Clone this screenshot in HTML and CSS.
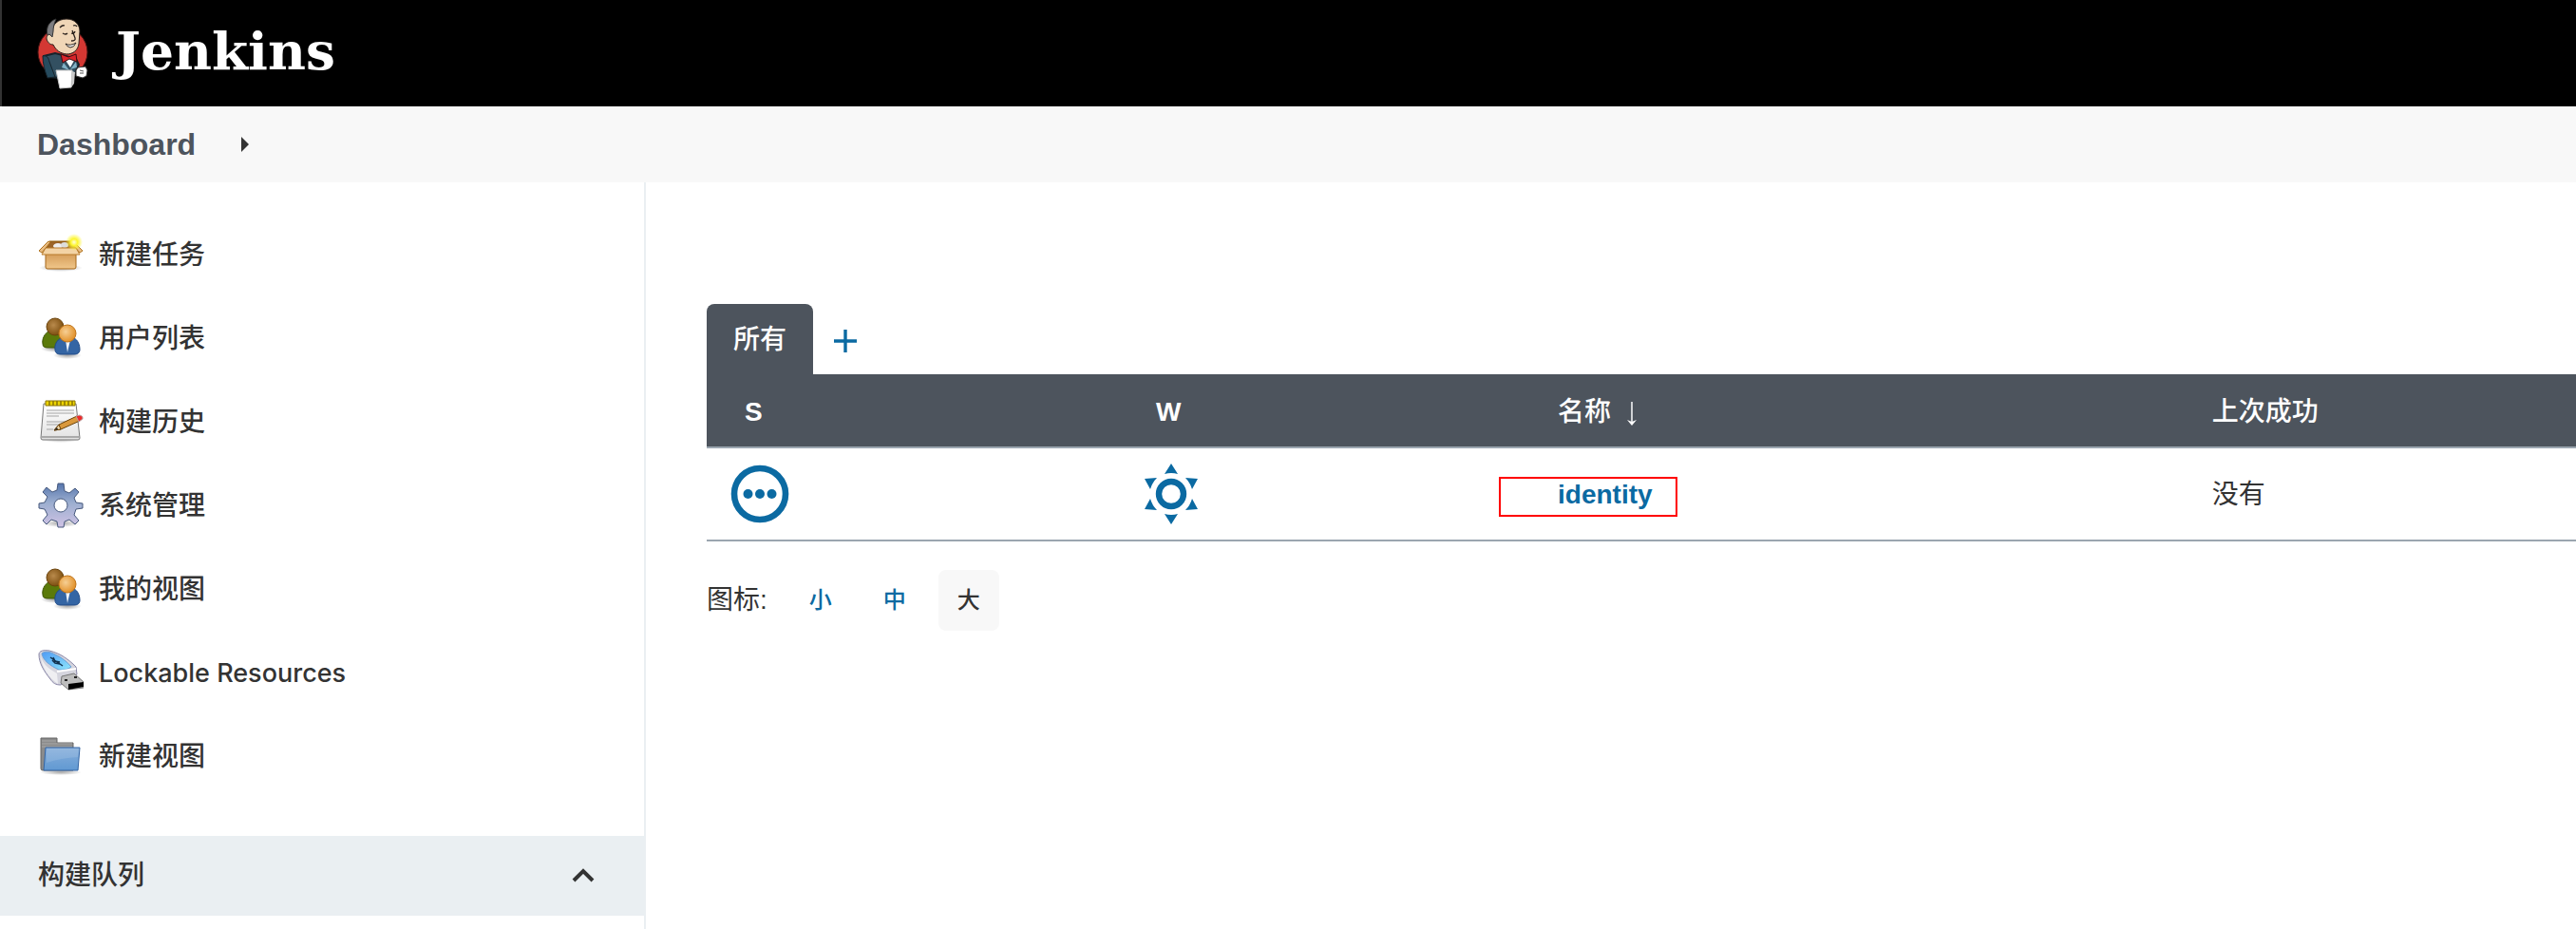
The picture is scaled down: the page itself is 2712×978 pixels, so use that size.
FILE: index.html
```
<!DOCTYPE html>
<html lang="zh-CN">
<head>
	<meta charset="utf-8">
	<title>Dashboard [Jenkins]</title>
	<link rel="stylesheet" href="styles.css">
</head>
<body>
	<svg class="defs" aria-hidden="true">
		<defs>
			<radialGradient id="brown" cx="40%" cy="40%" r="60%">
				<stop offset="0" stop-color="#b98a4c"/>
				<stop offset="1" stop-color="#7d4f10"/>
			</radialGradient>
			<radialGradient id="orange" cx="40%" cy="40%" r="60%">
				<stop offset="0" stop-color="#f6cf94"/>
				<stop offset="1" stop-color="#e2912a"/>
			</radialGradient>
			<radialGradient id="glow">
				<stop offset="0" stop-color="#fffde0"/>
				<stop offset="0.4" stop-color="#fdf62f"/>
				<stop offset="1" stop-color="#fdf62f" stop-opacity="0"/>
			</radialGradient>
			<radialGradient id="shadow">
				<stop offset="0" stop-color="#000" stop-opacity="0.35"/>
				<stop offset="1" stop-color="#000" stop-opacity="0"/>
			</radialGradient>
			<linearGradient id="box" x1="0" y1="0" x2="0" y2="1">
				<stop offset="0" stop-color="#cf9550"/>
				<stop offset="1" stop-color="#f0c68a"/>
			</linearGradient>
			<linearGradient id="gear" x1="0" y1="0" x2="0" y2="1">
				<stop offset="0" stop-color="#5676ad"/>
				<stop offset="0.45" stop-color="#9dafd0"/>
				<stop offset="1" stop-color="#cfc2e4"/>
			</linearGradient>
			<linearGradient id="paper" x1="0" y1="0" x2="0" y2="1">
				<stop offset="0" stop-color="#fff"/>
				<stop offset="1" stop-color="#e2e2e2"/>
			</linearGradient>
			<linearGradient id="folder" x1="0" y1="0" x2="0" y2="1">
				<stop offset="0" stop-color="#86aedb"/>
				<stop offset="1" stop-color="#6199d2"/>
			</linearGradient>
			<linearGradient id="usb" x1="0" y1="0" x2="1" y2="1">
				<stop offset="0" stop-color="#4f9bf5"/>
				<stop offset="1" stop-color="#8fe6fb"/>
			</linearGradient>
			<symbol id="people" viewBox="0 0 48 48">
				<ellipse cx="17" cy="35" rx="14" ry="4" fill="url(#shadow)"/>
				<ellipse cx="31" cy="42" rx="15" ry="4" fill="url(#shadow)"/>
				<path d="M11 17C7 19 4 25 5 30c0 3 2 4 5 4h14l3-17z" fill="#5b7a0a" stroke="#3d5405"/>
				<circle cx="18" cy="12" r="9" fill="url(#brown)" stroke="#6b430c"/>
				<path d="M24 24c-4 2-7 7-6 12 0 4 3 5 6 5h14c4 0 6-2 6-5 0-5-2-10-6-12z" fill="#3465a4" stroke="#204a87"/>
				<path d="M29 26l2 13 3-13z" fill="#eef2f8"/>
				<circle cx="31" cy="19" r="9" fill="url(#orange)" stroke="#c0741a"/>
			</symbol>
		</defs>
	</svg>

	<header class="page-header">
		<a class="logo" href="#">
			<svg class="logo-icon" viewBox="0 0 54 76" aria-hidden="true">
				<circle cx="27" cy="37" r="26" fill="#d33833" stroke="#4a1513"/>
				<path d="M7 41l12-3 8 2 14 4 3 6-4 9-3 1-1 5-24-2z" fill="#335061" stroke="#16232b" stroke-width="2"/>
				<path d="M6 41c5-1 6 2 7 6l3 8 3 8-8 1c-3-8-5-15-5-23z" fill="#264b5e" stroke="#16232b"/>
				<path d="M15 16c1-8 7-14 16-14 9 0 14 6 14 13l-1 13c-1 7-6 11-13 11-7-1-11-4-14-10-4 0-6-3-7-6 0-4 2-6 5-5z" fill="#f0d6b7" stroke="#2a211c" stroke-width="1"/>
				<path d="M11 19c-2-8 2-15 9-17-2 5-3 9-3 13l-1 6-3-3z" fill="#7d7d80" stroke="#333"/>
				<path d="M24 11q3-3 5-2M38 9q3-1 4 1M27 17q3 2 5 0M36 17q3 1 4-2M37 14l3 8q1 3-4 3" fill="none" stroke="#2a211c" stroke-width="1.3"/>
				<path d="M30 28q5 3 11-1q-2 5-6 5q-4-1-5-4z" fill="#fff" stroke="#2a211c"/>
				<path d="M29 44l6 9 5-9z" fill="#fff"/>
				<path d="M25 39l8 3 8-3 1 8-8-3-7 4z" fill="#d9252b" stroke="#3d0c0e"/>
				<path d="M28 48l6 8-8-3zM41 47l1 6-7 2z" fill="#81b0c4"/>
				<path d="M41 56l2-3 8-1 2 4-1 6-4 2-7-2z" fill="#fff" stroke="#333"/>
				<path d="M20 56h17l-1 18-12 1z" fill="#fff" stroke="#c8c8c8"/>
				<path d="M37 57l3 1-1 12-3 4z" fill="#ccc"/>
				<path d="M45 56l4 1M45 59h4" stroke="#555" fill="none"/>
			</svg>
			<span class="logo-text">Jenkins</span>
		</a>
	</header>

	<nav class="breadcrumbs">
		<a class="breadcrumb" href="#">Dashboard</a>
		<svg class="breadcrumb-arrow" viewBox="0 0 8 16" aria-hidden="true"><path d="M0 0l8 8-8 8z" fill="#333"/></svg>
	</nav>

	<div class="page-body">
		<aside class="side-panel">
			<nav class="tasks">
				<a class="task" href="#">
					<svg class="task-icon" viewBox="0 0 48 48" aria-hidden="true">
						<ellipse cx="24" cy="38" rx="23" ry="4" fill="url(#shadow)"/>
						<path d="M12 10h26l2 8H9z" fill="#9b6429" stroke="#8f5902"/>
						<ellipse cx="21" cy="15" rx="5" ry="3" fill="#eee"/>
						<ellipse cx="28" cy="14" rx="4" ry="3" fill="#ddd"/>
						<path d="M11 10L1 20l3 2 9-11zM37 10l10 10-3 2-7-8z" fill="#e9bd84" stroke="#b0731f"/>
						<path d="M8 20h32v17q0 2-2 2H10q-2 0-2-2z" fill="url(#box)" stroke="#a4661a"/>
						<path d="M8 17h32l4 7H4z" fill="#f3d3a5" stroke="#b97b2b"/>
						<circle cx="38" cy="11" r="9" fill="url(#glow)"/>
					</svg>
					<span class="task-name">新建任务</span>
				</a>
				<a class="task" href="#">
					<svg class="task-icon" aria-hidden="true"><use href="#people"/></svg>
					<span class="task-name">用户列表</span>
				</a>
				<a class="task" href="#">
					<svg class="task-icon" viewBox="0 0 48 48" aria-hidden="true">
						<ellipse cx="24" cy="42" rx="22" ry="4" fill="url(#shadow)"/>
						<path d="M6 5h34l4 36q0 2-2 2H5q-2 0-2-2z" fill="url(#paper)" stroke="#777"/>
						<path d="M4 40h39" stroke="#aaa" stroke-width="2"/>
						<path d="M9 12h29M9 15h29M9 18h13M9 24h25M9 27h20M9 32h7" stroke="#a3a3a3" fill="none"/>
						<path d="M8 2h4v5h-4zM12 2h4v5h-4zM16 2h4v5h-4zM20 2h4v5h-4zM24 2h4v5h-4zM28 2h4v5h-4zM32 2h4v5h-4zM36 2h3v5h-3z" fill="#edd400" stroke="#8a7400"/>
						<path d="M17 33l5-6 19-9 3 5-20 9z" fill="#d9983c" stroke="#6b4208"/>
						<path d="M17 33l5-6 2 5z" fill="#f0d9ae" stroke="#6b4208"/>
						<path d="M40 18l4-1q4 1 3 4l-4 3z" fill="#ef2929" stroke="#b9a0a0"/>
						<path d="M17 33l3-3 1 2z" fill="#222"/>
					</svg>
					<span class="task-name">构建历史</span>
				</a>
				<a class="task" href="#">
					<svg class="task-icon" viewBox="0 0 48 48" aria-hidden="true">
						<ellipse cx="24" cy="43" rx="20" ry="4" fill="url(#shadow)"/>
						<path fill-rule="evenodd" d="M21 1h6l1 8 5 2 6-5 4 4-5 6 2 5 7 1v5l-7 1-2 6 5 6-4 4-6-5-5 2-1 6h-6l-1-6-6-2-5 5-4-4 5-6-3-6-6-1v-5l6-1 3-6-5-5 4-5 6 5 5-2zM24 17a7 7 0 1 0 0 14 7 7 0 1 0 0-14z" fill="url(#gear)" stroke="#46587c"/>
					</svg>
					<span class="task-name">系统管理</span>
				</a>
				<a class="task" href="#">
					<svg class="task-icon" aria-hidden="true"><use href="#people"/></svg>
					<span class="task-name">我的视图</span>
				</a>
				<a class="task" href="#">
					<svg class="task-icon" viewBox="0 0 48 48" aria-hidden="true">
						<path d="M1 5C1 1 6 0 12 1c12 3 20 9 28 17l1 8-17 11c-6 0-8-2-11-6C6 22 1 14 1 5z" fill="#d5d5de" stroke="#8a87a8"/>
						<path d="M3 6c1 8 8 14 17 19l1 11C12 30 3 18 3 6z" fill="#efeff2"/>
						<path d="M4 4c3-3 9-2 14 1 7 3 13 8 17 13q-5 4-13 3C13 17 5 11 4 4z" fill="url(#usb)" stroke="#6a9fd6"/>
						<path d="M13 8l13 9M16 8l2 4 5 1M15 11l3 3 5 1" stroke="#12314e" stroke-width="1.5" fill="none"/>
						<path d="M20 23l20-3" stroke="#fff" stroke-width="2"/>
						<path d="M25 28l13-3 10 9v6l-16 2-8-7z" fill="#bdbdbd" stroke="#777"/>
						<path d="M32 36l16-2v5l-16 3z" fill="#000"/>
						<path d="M28 31h3v2h-3zM38 28h3v2h-3z" fill="#222"/>
					</svg>
					<span class="task-name task-latin">Lockable Resources</span>
				</a>
				<a class="task" href="#">
					<svg class="task-icon" viewBox="0 0 48 48" aria-hidden="true">
						<ellipse cx="24" cy="41" rx="22" ry="3" fill="url(#shadow)"/>
						<path d="M3 5h17v5h17v29H5q-2 0-2-2z" fill="#8b8b8b" stroke="#666"/>
						<path d="M4 8h15M4 11h32M4 14h32" stroke="#a8a8a8" fill="none"/>
						<path d="M8 15h36l-2 24H6z" fill="url(#folder)" stroke="#3465a4"/>
						<path d="M9 16h34l-1 9q-18 1-33 6z" fill="#fff" opacity="0.12"/>
					</svg>
					<span class="task-name">新建视图</span>
				</a>
			</nav>
			<section class="pane-header">
				<h2 class="pane-title">构建队列</h2>
				<button class="collapse" type="button" aria-label="collapse">
					<svg class="collapse-icon" viewBox="0 0 24 16" aria-hidden="true"><path d="M2 13L12 3l10 10" fill="none" stroke="#333" stroke-width="4"/></svg>
				</button>
			</section>
		</aside>

		<main class="main-panel">
			<div class="tabs">
				<a class="tab" href="#">所有</a>
				<a class="tab-add" href="#" aria-label="新建视图">
					<svg class="plus" viewBox="0 0 24 24" aria-hidden="true"><path d="M12 0v24M0 12h24" stroke="#0b6aa2" stroke-width="3.4"/></svg>
				</a>
			</div>
			<table class="jobs">
				<colgroup>
					<col class="col-status">
					<col class="col-weather">
					<col class="col-name">
					<col>
				</colgroup>
				<thead>
					<tr>
						<th class="short">S</th>
						<th class="short">W</th>
						<th>名称 <svg class="sort-arrow" viewBox="0 0 12 26" aria-hidden="true"><path d="M6 0v22" stroke="#cfd2d5" stroke-width="2"/><path d="M1 19l5 2 5-2-5 6z" fill="#fff"/></svg></th>
						<th>上次成功</th>
					</tr>
				</thead>
				<tbody>
					<tr>
						<td class="icon-cell">
							<svg class="job-icon" viewBox="0 0 64 64" role="img" aria-label="未构建">
								<circle cx="32" cy="32" r="27" fill="none" stroke="#0b6aa2" stroke-width="6.6"/>
								<circle cx="19.5" cy="32" r="5" fill="#0b6aa2"/>
								<circle cx="32" cy="32" r="5" fill="#0b6aa2"/>
								<circle cx="44.5" cy="32" r="5" fill="#0b6aa2"/>
							</svg>
						</td>
						<td class="icon-cell">
							<svg class="job-icon" viewBox="0 0 64 64" role="img" aria-label="100%">
								<g fill="#0b6aa2">
									<circle cx="32" cy="32" r="13" fill="none" stroke="#0b6aa2" stroke-width="6.4"/>
									<path d="M32 0l7 11q-7-2-14 0z"/>
									<path d="M32 64l7-11q-7 2-14 0z"/>
									<path d="M4 16l13-1q-5 5-7 12z"/>
									<path d="M60 16l-13-1q5 5 7 12z"/>
									<path d="M4 48l13 1q-5-5-7-12z"/>
									<path d="M60 48l-13 1q5-5 7-12z"/>
								</g>
							</svg>
						</td>
						<td><span class="marked"><a class="job-link" href="#">identity</a></span></td>
						<td>没有</td>
					</tr>
				</tbody>
			</table>
			<div class="icon-sizes">
				<span class="icon-label">图标:</span>
				<a class="size" href="#">小</a>
				<a class="size" href="#">中</a>
				<span class="size size-active">大</span>
			</div>
		</main>
	</div>
</body>
</html>
```
FILE: styles.css
```
*,
*::before {
	box-sizing: border-box;
}
body {
	margin: 0;
	min-height: 100vh;
	display: flex;
	flex-direction: column;
	font-family: "Liberation Sans", "Noto Sans CJK SC", sans-serif;
	font-size: 28px;
	line-height: 40px;
	color: #333;
	background: #fff;
}
a {
	color: #0b6aa2;
	text-decoration: none;
}
svg {
	display: block;
	flex: none;
}
.defs {
	position: absolute;
	width: 0;
	height: 0;
}

/* header */
.page-header {
	height: 112px;
	display: flex;
	align-items: center;
	padding-left: 36px;
	border-left: 2px solid #333;
	background: #000;
}
.logo {
	display: flex;
	align-items: center;
	gap: 28px;
}
.logo-icon {
	width: 56px;
	height: 76px;
}
.logo-text {
	padding-bottom: 4px;
	font-family: "DejaVu Serif", serif;
	font-size: 55px;
	font-weight: bold;
	line-height: 64px;
	color: #fff;
}
.breadcrumbs {
	height: 80px;
	display: flex;
	align-items: center;
	gap: 48px;
	padding-left: 39px;
	background: #f8f8f8;
}
.breadcrumb {
	font-size: 32px;
	font-weight: bold;
	color: #4d545d;
}
.breadcrumb-arrow {
	width: 8px;
	height: 16px;
}

/* side panel */
.page-body {
	flex: 1;
	display: flex;
}
.side-panel {
	flex: none;
	width: 680px;
	border-right: 2px solid #eaeff2;
}
.tasks {
	padding: 32px 0 40px 40px;
}
.task {
	height: 88px;
	display: flex;
	align-items: center;
	gap: 16px;
	font-weight: 500;
	color: #333;
}
.task-icon {
	width: 48px;
	height: 48px;
}
.task-name {
	padding-top: 2px;
}
.task-latin {
	font-family: Inter, sans-serif;
	font-size: 27px;
}
.pane-header {
	height: 84px;
	display: flex;
	align-items: center;
	justify-content: space-between;
	padding: 0 52px 0 40px;
	background: #eaeff2;
}
.pane-title {
	margin: 0;
	font-size: 28px;
	font-weight: 500;
}
.collapse {
	padding: 0;
	border: 0;
	background: none;
}
.collapse-icon {
	width: 24px;
	height: 16px;
}

/* main panel */
.main-panel {
	flex: 1;
	min-width: 0;
	padding: 128px 0 0 64px;
}
.tabs {
	display: flex;
}
.tab {
	height: 74px;
	padding: 18px 28px;
	border-radius: 8px 8px 0 0;
	font-weight: 500;
	color: #fff;
	background: #4d545d;
}
.tab-add {
	display: flex;
	align-items: center;
	padding: 4px 22px 0;
}
.plus {
	width: 24px;
	height: 24px;
}
.jobs {
	width: 100%;
	table-layout: fixed;
	border-spacing: 0;
}
.col-status {
	width: 22%;
}
.col-weather {
	width: 21.5%;
}
.col-name {
	width: 35%;
}
.jobs th,
.jobs td {
	padding: 2px 0 0 40px;
	text-align: left;
	border-bottom: 2px solid #9ba6b0;
}
.jobs th {
	height: 78px;
	padding-top: 4px;
	font-weight: 500;
	color: #fff;
	background: #4d545d;
}
.jobs .short {
	font-weight: bold;
}
.jobs td {
	height: 98px;
}
.jobs .icon-cell {
	padding: 0 0 0 24px;
}
.sort-arrow {
	display: inline-block;
	width: 12px;
	height: 26px;
	margin-left: 8px;
	vertical-align: middle;
}
.job-icon {
	width: 64px;
	height: 64px;
}
.job-link {
	font-weight: bold;
}
.marked {
	position: relative;
}
/* red frame round the job name */
.marked::before {
	content: "";
	position: absolute;
	top: -3px;
	left: -62px;
	width: 188px;
	height: 42px;
	border: 2px solid #f00;
}
.icon-sizes {
	display: flex;
	align-items: center;
	gap: 14px;
	margin-top: 30px;
}
.icon-label {
	margin-right: 10px;
}
.size {
	width: 64px;
	height: 64px;
	border-radius: 8px;
	font-size: 24px;
	font-weight: 500;
	line-height: 64px;
	text-align: center;
}
.size-active {
	background: #f8f8f8;
}
```
